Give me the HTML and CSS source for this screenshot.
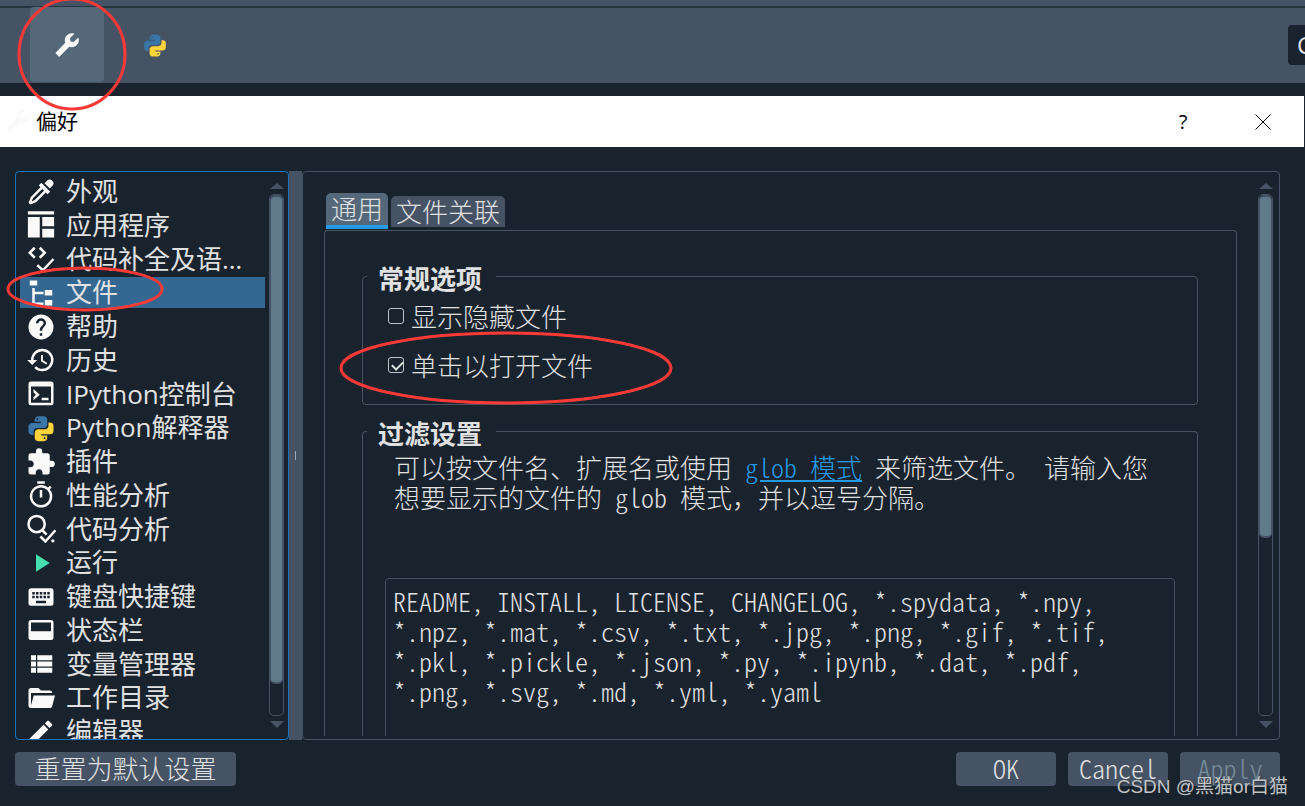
FILE: index.html
```html
<!DOCTYPE html>
<html lang="zh-CN">
<head>
  <meta charset="utf-8">
  <title>偏好</title>
  <link rel="stylesheet" href="styles.css">
</head>
<body>
  <!-- shared icons -->
  <svg class="defs" aria-hidden="true">
    <symbol id="wrench" viewBox="0 0 24 24">
      <path d="M1.3 19.4l9.1-9.5C9.5 7.6 10 4.9 11.9 3c1.800-1.900 4.600-2.400 7-1.500L14.700 5.800l.5 2.900 3 .600L22.400 5c1 2.500.600 5.200-1.400 7.100-1.900 1.900-4.600 2.400-6.900 1.500L4.700 23z"/>
    </symbol>
    <symbol id="python" viewBox="0 0 24 24">
      <path fill="#3a76a8" d="M4.860 17.500C3.280 17.500 2 16.220 2 14.640V10.860C2 9.280 3.280 8 4.860 8H12C12 7.610 11.680 7.040 11.290 7.040H7V5.360C7 3.780 8.280 2.500 9.860 2.500H14.140C15.720 2.500 17 3.780 17 5.360V9.110C17 10.690 15.720 11.960 14.140 11.960H8.890C7.310 11.960 6.040 13.240 6.040 14.820V17.500zM9.140 5.710c.4 0 .72-.3.72-.890s-.32-.71-.72-.71-.71.12-.71.71.32.89.71.89z"/>
      <path fill="#ffd43b" d="M19.140 7.500A2.860 2.860 0 0 1 22 10.360V14.140A2.860 2.860 0 0 1 19.140 17H12C12 17.390 12.320 17.960 12.710 17.960H17V19.640A2.860 2.860 0 0 1 14.140 22.500H9.860A2.860 2.860 0 0 1 7 19.640V15.890C7 14.310 8.280 13.040 9.860 13.040H15.110C16.690 13.040 17.960 11.760 17.960 10.180V7.500zM14.860 19.290c-.4 0-.72.3-.72.89s.32.71.72.71a.71.71 0 0 0 .71-.71c0-.59-.32-.89-.71-.89z"/>
    </symbol>
  </svg>

  <header class="toolbar">
    <button class="tool active" aria-label="偏好"><svg><use href="#wrench"/></svg></button>
    <button class="tool" aria-label="Python"><svg><use href="#python"/></svg></button>
    <span class="path">C</span>
  </header>

  <main class="dialog">
    <div class="titlebar">
      <svg class="title-icon"><use href="#wrench"/></svg>
      <h1>偏好</h1>
      <button class="win help" aria-label="帮助">?</button>
      <button class="win" aria-label="关闭"><svg viewBox="0 0 16 16"><path d="M.5.500l15 15M15.500.500l-15 15" fill="none" stroke="#000"/></svg></button>
    </div>

    <div class="panels">
      <nav class="sidebar">
        <ul class="menu">
          <li><a href="#"><svg viewBox="0 0 24 24"><path d="M19.350 11.720l-2.130 2.130-1.410-1.420-7.710 7.710L3.500 22 2 20.500l1.860-4.600 7.710-7.710-1.420-1.410 2.130-2.130zM16.760 3a3 3 0 0 1 4.240 0 3 3 0 0 1 0 4.240l-1.920 1.920-4.240-4.240zM5.560 17.030L4.500 19.500l2.470-1.060 7.430-7.420-1.420-1.420z"/></svg>外观</a></li>
          <li><a href="#"><svg viewBox="0 0 24 24"><path d="M1.500 1h21v2.500h-21zM1.500 5.500H11V22H1.500zM13 5.500h9.500V13H13zM13 15h9.500v7H13z"/></svg>应用程序</a></li>
          <li><a href="#"><svg viewBox="0 0 24 24"><path class="line" d="M7 3L3 7l4 4M11 3l4 4-4 4M9 17l4.500 4L22 12"/></svg><span>代码补全及语…</span></a></li>
          <li class="selected"><a href="#"><svg viewBox="0 0 24 24"><path d="M3 2h6v4H3zM15 9.500h6v4.500h-6zM15 17.500h6V22h-6zM5 8h2v3h7v2H7v6.500h7v2H5z"/></svg>文件</a></li>
          <li><a href="#"><svg viewBox="0 0 24 24"><path d="M15.070 11.250l-.9.920C13.450 12.890 13 13.500 13 15h-2v-.5c0-1.110.45-2.110 1.170-2.830l1.240-1.260c.37-.36.590-.86.590-1.410a2 2 0 0 0-4 0H8a4 4 0 0 1 8 0c0 .88-.36 1.670-.93 2.250M13 19h-2v-2h2M12 2a10 10 0 1 0 0 20 10 10 0 0 0 0-20z"/></svg>帮助</a></li>
          <li><a href="#"><svg viewBox="0 0 24 24"><path d="M13.500 8H12v5l4.280 2.540.72-1.210-3.500-2.080zM13 3a9 9 0 0 0-9 9H1l3.960 4.030L9 12H6a7 7 0 1 1 7 7c-1.930 0-3.680-.79-4.940-2.060l-1.420 1.420A8.900 8.900 0 0 0 13 21a9 9 0 0 0 0-18"/></svg>历史</a></li>
          <li><a href="#"><svg viewBox="0 0 24 24"><path d="M4 2h16a2 2 0 0 1 2 2v15a2 2 0 0 1-2 2H4a2 2 0 0 1-2-2V4c0-1.100.900-2 2-2zM4 6v13h16V6zM6 8l5 4.500-5 4.500v-2.600L8 12.500 6 10.600zM12.500 15H18v2h-5.500z"/></svg>IPython控制台</a></li>
          <li><a href="#"><svg><use href="#python"/></svg>Python解释器</a></li>
          <li><a href="#"><svg viewBox="0 0 24 24"><path d="M20.500 11H19V7a2 2 0 0 0-2-2h-4V3.500a2.500 2.500 0 0 0-5 0V5H4a2 2 0 0 0-2 2v3.800h1.500c1.500 0 2.700 1.200 2.700 2.700s-1.200 2.700-2.700 2.700H2V20a2 2 0 0 0 2 2h3.800v-1.500c0-1.500 1.200-2.700 2.700-2.700s2.700 1.200 2.700 2.700V22H17a2 2 0 0 0 2-2v-4h1.500a2.500 2.500 0 0 0 0-5z"/></svg>插件</a></li>
          <li><a href="#"><svg viewBox="0 0 24 24"><path d="M12 20a7 7 0 1 1 0-14 7 7 0 0 1 0 14m7.030-12.610l1.420-1.420c-.45-.51-.9-.970-1.410-1.410L17.620 6a9 9 0 1 0 1.410 1.390M11 14h2V8h-2m4-7H9v2h6z"/></svg>性能分析</a></li>
          <li><a href="#"><svg viewBox="0 0 24 24"><circle class="line" cx="8.500" cy="8" r="6.500"/><path class="line" d="M13 13l3.500 3.500M11.500 18l4 4 8-9"/><circle cx="21.500" cy="21.500" r="1.300"/></svg>代码分析</a></li>
          <li><a href="#"><svg viewBox="0 0 24 24"><path fill="#44deb0" d="M8 5v14l11-7z"/></svg>运行</a></li>
          <li><a href="#"><svg viewBox="0 0 24 24"><path fill-rule="evenodd" d="M4 5h16a2 2 0 0 1 2 2v10a2 2 0 0 1-2 2H4a2 2 0 0 1-2-2V7c0-1.100.900-2 2-2zM5 8v2h2V8zm3 0v2h2V8zm3 0v2h2V8zm3 0v2h2V8zm3 0v2h2V8zM5 11v2h2v-2zm3 0v2h2v-2zm3 0v2h2v-2zm3 0v2h2v-2zm3 0v2h2v-2zM8 15v2h8v-2z"/></svg>键盘快捷键</a></li>
          <li><a href="#"><svg viewBox="0 0 24 24"><path fill-rule="evenodd" d="M4 4h16a2 2 0 0 1 2 2v12a2 2 0 0 1-2 2H4a2 2 0 0 1-2-2V6c0-1.100.900-2 2-2zM4 6v7h16V6z"/></svg>状态栏</a></li>
          <li><a href="#"><svg viewBox="0 0 24 24"><path d="M4 5h4v4H4zM9 5h12v4H9zM4 10h4v4H4zM9 10h12v4H9zM4 15h4v4H4zM9 15h12v4H9z"/></svg>变量管理器</a></li>
          <li><a href="#"><svg viewBox="0 0 24 24"><path d="M19 20H4a2 2 0 0 1-2-2V6c0-1.110.890-2 2-2h6l2 2h7a2 2 0 0 1 2 2H4v10l2.140-8h17.070l-2.280 8.500c-.23.870-1.010 1.500-1.930 1.500z"/></svg>工作目录</a></li>
          <li><a href="#"><svg viewBox="0 0 24 24"><path d="M20.710 7.040c.39-.39.390-1.040 0-1.410l-2.340-2.340c-.37-.39-1.020-.39-1.410 0l-1.840 1.830 3.750 3.750M3 17.250V21h3.750L17.810 9.930l-3.750-3.750z"/></svg>编辑器</a></li>
        </ul>
        <div class="scrollbar">
          <span class="arrow up"></span>
          <div class="groove"><div class="thumb"></div></div>
          <span class="arrow down"></span>
        </div>
      </nav>

      <div class="splitter"><span></span></div>

      <section class="content">
        <div class="page">
          <div class="tabs">
            <button class="tab current">通用</button>
            <button class="tab">文件关联</button>
          </div>
          <div class="pane">
            <fieldset class="group general">
              <legend>常规选项</legend>
              <label><input type="checkbox">显示隐藏文件</label>
              <label><input type="checkbox" checked>单击以打开文件</label>
            </fieldset>
            <fieldset class="group filter">
              <legend>过滤设置</legend>
              <p id="hint">可以按文件名、扩展名或使用<span class="half"> </span><a href="#"><span class="half">glob </span>模式</a><span class="half"> </span>来筛选文件。<span class="half"> </span>请输入您想要显示的文件的<span class="half"> glob </span>模式，并以逗号分隔。</p>
              <textarea class="half" aria-labelledby="hint" spellcheck="false">README, INSTALL, LICENSE, CHANGELOG, *.spydata, *.npy, *.npz, *.mat, *.csv, *.txt, *.jpg, *.png, *.gif, *.tif, *.pkl, *.pickle, *.json, *.py, *.ipynb, *.dat, *.pdf, *.png, *.svg, *.md, *.yml, *.yaml</textarea>
            </fieldset>
          </div>
        </div>
        <div class="scrollbar">
          <span class="arrow up"></span>
          <div class="groove"><div class="thumb short"></div></div>
          <span class="arrow down"></span>
        </div>
      </section>
    </div>

    <footer class="actions">
      <button class="reset">重置为默认设置</button>
      <button class="half">OK</button>
      <button class="half">Cancel</button>
      <button class="half" disabled>Apply</button>
    </footer>
  </main>

  <!-- red marks -->
  <svg class="marks" aria-hidden="true">
    <ellipse cx="72" cy="54" rx="53" ry="55"/>
    <ellipse cx="85" cy="289" rx="77" ry="21"/>
    <ellipse cx="506" cy="368" rx="165" ry="35"/>
  </svg>
  <div class="watermark">CSDN @黑猫or白猫</div>
</body>
</html>
```
FILE: styles.css
```css
* {
  box-sizing: border-box;
  margin: 0;
  padding: 0;
}
body {
  display: flex;
  flex-direction: column;
  height: 100vh;
  overflow: hidden;
  background: #19232d;
  color: #e0e1e3;
  font: 300 26px/30px "Noto Sans CJK SC", sans-serif;
}
button, textarea {
  font: inherit;
  color: inherit;
  border: 0;
}
svg {
  fill: #fafafa;
}
/* half-width latin */
.half {
  font-feature-settings: "hwid";
}
.defs {
  position: absolute;
  width: 0;
  height: 0;
}

/* toolbar */
.toolbar {
  display: flex;
  align-items: center;
  gap: 14px;
  height: 83px;
  padding: 6px 0 0 30px;
  background: linear-gradient(#455364 6px, #27333f 6px, #27333f 8px, #455364 8px);
}
.tool {
  display: grid;
  place-items: center;
  width: 74px;
  height: 75px;
  border-radius: 4px;
  background: none;
}
.tool.active {
  background: #54687a;
}
.tool svg {
  width: 26px;
  height: 26px;
}
.path {
  width: 17px;
  height: 40px;
  margin-left: auto;
  padding-left: 9px;
  overflow: hidden;
  border-radius: 4px 0 0 4px;
  background: #19232d;
  font: 24px/40px "Open Sans", sans-serif;
}

/* dialog */
.dialog {
  display: flex;
  flex: 1;
  flex-direction: column;
  min-height: 0;
  margin-top: 13px;
}
.titlebar {
  display: flex;
  align-items: center;
  height: 51px;
  margin-right: 1px;
  padding: 0 33px 0 5px;
  background: #fff;
  color: #000;
}
.title-icon {
  width: 25px;
  height: 25px;
  margin-right: 6px;
}
.titlebar h1 {
  flex: 1;
  padding-bottom: 4px;
  font-size: 21px;
  font-weight: 400;
}
.win {
  width: 16px;
  height: 30px;
  margin-left: 64px;
  background: none;
}
.win.help {
  font: 20px/30px "Open Sans", sans-serif;
}
.win svg {
  display: block;
  width: 16px;
  height: 16px;
}
.panels {
  display: flex;
  flex: 1;
  min-height: 0;
  margin: 24px 25px 12px 15px;
}

/* category list */
.sidebar {
  display: flex;
  width: 274px;
  padding: 4px;
  border: 1px solid #1a72bb;
  border-radius: 4px;
  overflow: hidden;
}
.menu {
  display: flex;
  flex: 1;
  flex-direction: column;
  justify-content: space-between;
  margin-bottom: -12px;
  list-style: none;
  font: 400 26px/31px "Open Sans", "Noto Sans CJK SC", sans-serif;
}
.menu a {
  display: flex;
  align-items: center;
  gap: 10px;
  height: 31px;
  padding-left: 6px;
  color: inherit;
  text-decoration: none;
  white-space: nowrap;
}
.menu svg {
  flex: none;
  width: 30px;
  height: 30px;
}
.menu .line {
  fill: none;
  stroke: #fafafa;
  stroke-width: 2;
}
.menu .selected {
  background: #346792;
}
.scrollbar {
  display: flex;
  flex: none;
  flex-direction: column;
  align-items: center;
  justify-content: space-between;
  width: 15px;
  padding: 7px 0;
}
.sidebar .scrollbar {
  margin-left: 4px;
}
.arrow {
  border: 7px solid transparent;
  border-width: 0 7px;
}
.arrow.up {
  border-bottom: 6px solid #455364;
}
.arrow.down {
  border-top: 7px solid #455364;
}
.groove {
  flex: 1;
  width: 15px;
  margin: 5px 0;
  border: 1px solid #455364;
  border-radius: 5px;
}
.thumb {
  height: 94%;
  border: 2px solid #455364;
  border-width: 2px 1px;
  border-radius: 5px;
  background: #60798b;
}
.thumb.short {
  height: 66%;
}
.splitter {
  display: grid;
  place-items: center;
  width: 13px;
  background: #455364;
}
.splitter span {
  width: 1px;
  height: 9px;
  background: #9da9b5;
}

/* settings page */
.content {
  display: flex;
  flex: 1;
  gap: 21px;
  min-width: 0;
  padding: 3px 6px 3px 21px;
  border: 1px solid #455364;
  border-radius: 4px;
}
.page {
  display: flex;
  flex: 1;
  flex-direction: column;
  min-width: 0;
  overflow: hidden;
  padding-top: 18px;
}
.content .scrollbar {
  padding: 8px 0;
}
.tabs {
  display: flex;
  align-items: flex-end;
  gap: 3px;
  height: 36px;
  padding-left: 2px;
}
.tab {
  height: 31px;
  margin-bottom: 2px;
  padding: 0 5px 2px;
  border-radius: 5px 5px 0 0;
  background: #455364;
}
.tab.current {
  height: 36px;
  margin: 0;
  border-bottom: 4px solid #259ae9;
  background: #54687a;
}
.pane {
  display: flex;
  flex: 1;
  flex-direction: column;
  gap: 9px;
  min-height: 0;
  margin-top: 1px;
  padding: 28px 38px 0 37px;
  border: 1px solid #455364;
  border-bottom: 0;
  border-radius: 4px 4px 0 0;
}
.group {
  min-width: 0;
  padding: 0 22px 0 4px;
  border: 1px solid #455364;
  border-radius: 4px;
}
.group legend {
  padding: 4px 14px 0 11px;
  font-weight: 600;
}
.general {
  flex: none;
  height: 146px;
}
.group label {
  display: flex;
  align-items: center;
  gap: 7px;
  height: 30px;
  margin: 8px 0 19px 21px;
}
.group input {
  appearance: none;
  width: 16px;
  height: 16px;
  border: 1px solid #c0c4c8;
  border-radius: 3px;
}
.group input:checked::after {
  content: "";
  display: block;
  width: 5px;
  height: 9px;
  margin: 1px 0 0 5px;
  border: solid #e0e1e3;
  border-width: 0 2px 2px 0;
  transform: rotate(45deg);
}
.filter {
  flex: 1;
  border-bottom: 0;
  border-radius: 4px 4px 0 0;
}
.filter p {
  margin: 4px 0 66px 27px;
  padding-right: 16px;
}
.filter a {
  color: #259ae9;
}
.filter textarea {
  display: block;
  width: calc(100% - 18px);
  height: 240px;
  margin-left: 18px;
  padding: 7px 40px 8px 7px;
  border: 1px solid #455364;
  border-radius: 4px;
  background: none;
  resize: none;
  overflow: hidden;
}

/* buttons */
.actions {
  display: flex;
  gap: 12px;
  margin: 0 25px 20px 15px;
}
.actions button {
  width: 100px;
  height: 34px;
  padding-bottom: 2px;
  border-radius: 4px;
  background: #455364;
}
.actions .reset {
  width: 221px;
  margin-right: auto;
}
.actions button:disabled {
  color: #788d9c;
}

.marks {
  position: absolute;
  top: 0;
  left: 0;
  width: 100%;
  height: 100%;
  fill: none;
  stroke: #fb3a38;
  stroke-width: 3;
  pointer-events: none;
}
.marks ellipse {
  fill: none;
}
.watermark {
  position: absolute;
  right: 17px;
  bottom: 5px;
  color: #c0c3c6;
  font: 19px/28px "Liberation Sans", "Noto Sans CJK SC", sans-serif;
  text-shadow: 1px 1px 2px #19232d;
}
```
